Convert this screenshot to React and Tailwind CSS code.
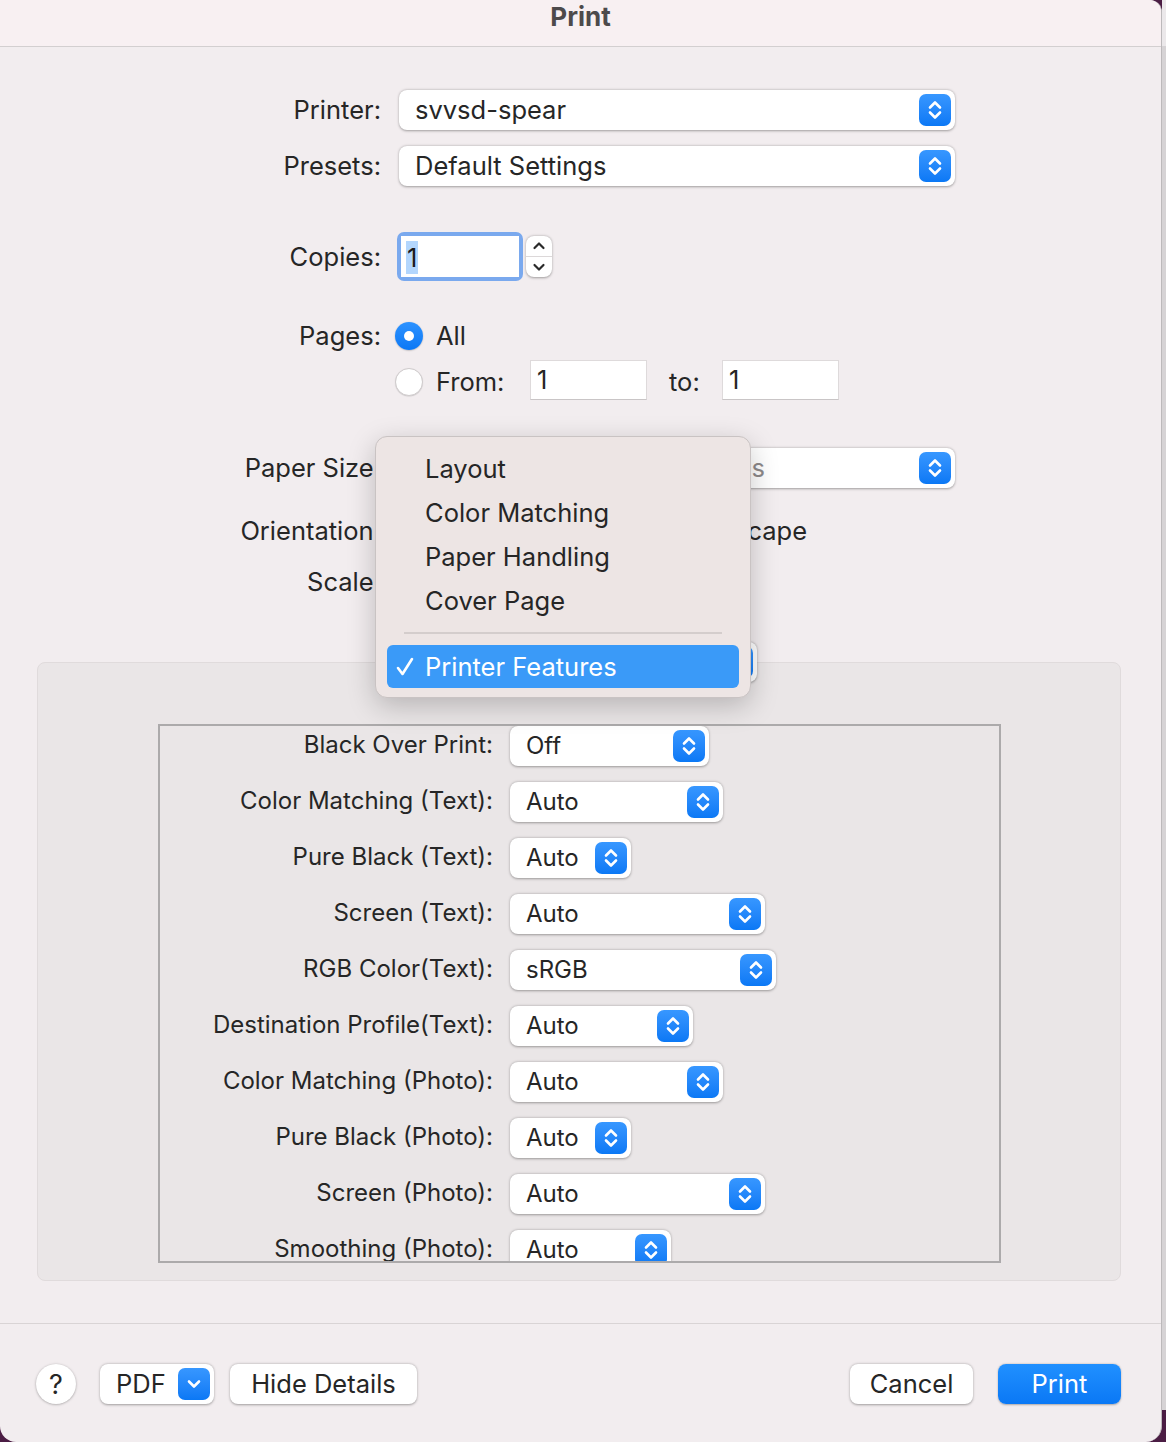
import React from 'react';

const font = "font-['Inter','Liberation_Sans',sans-serif]";

function Stepper() {
    return (
        <div className="w-[32px] h-[32px] shrink-0 rounded-[7px] bg-gradient-to-b from-[#3797ff] to-[#0a78f5] flex items-center justify-center">
            <svg width="32" height="32" viewBox="0 0 32 32" fill="none" stroke="white" strokeWidth="2.6" strokeLinecap="round" strokeLinejoin="round">
                <path d="M11 13.5 L16 8.5 L21 13.5" />
                <path d="M11 18.5 L16 23.5 L21 18.5" />
            </svg>
        </div>
    );
}

function Select({ value, className = '', size = 'text-[25.5px]' }) {
    return (
        <div className={`h-[40px] bg-white rounded-[8px] shadow-[0_0.5px_2.5px_rgba(0,0,0,0.35)] flex items-center justify-between pl-[16px] pr-[4px] ${className}`}>
            <span className={`${size} leading-[32px] whitespace-nowrap text-[#262626]`}>{value}</span>
            <Stepper />
        </div>
    );
}

function Row({ label, className = '', children }) {
    return (
        <div className={`flex items-center ${className}`}>
            <div className="w-[381px] shrink-0 text-right text-[25.5px] text-[#262626] leading-[32px] whitespace-nowrap">{label}</div>
            {children}
        </div>
    );
}

function Field({ value }) {
    return (
        <div className="w-[117px] h-[40px] bg-white border border-[#dedadb] border-b-[#c9c5c6] flex items-center pl-[6px] text-[25.5px] text-[#262626]">
            {value}
        </div>
    );
}

const features = [
    { label: 'Black Over Print:', value: 'Off', w: 'w-[199px]' },
    { label: 'Color Matching (Text):', value: 'Auto', w: 'w-[213px]' },
    { label: 'Pure Black (Text):', value: 'Auto', w: 'w-[121px]' },
    { label: 'Screen (Text):', value: 'Auto', w: 'w-[255px]' },
    { label: 'RGB Color(Text):', value: 'sRGB', w: 'w-[266px]' },
    { label: 'Destination Profile(Text):', value: 'Auto', w: 'w-[183px]' },
    { label: 'Color Matching (Photo):', value: 'Auto', w: 'w-[213px]' },
    { label: 'Pure Black (Photo):', value: 'Auto', w: 'w-[121px]' },
    { label: 'Screen (Photo):', value: 'Auto', w: 'w-[255px]' },
    { label: 'Smoothing (Photo):', value: 'Auto', w: 'w-[161px]' },
];

const menuItems = ['Layout', 'Color Matching', 'Paper Handling', 'Cover Page'];

const btn = 'h-[40px] bg-white rounded-[8px] shadow-[0_0.5px_2.5px_rgba(0,0,0,0.35)] flex items-center text-[25.5px] text-[#262626] leading-none';

export default function App() {
    return (
        <div className={`flex w-[1166px] h-[1442px] bg-[#4b1d44] ${font}`}>
            <div className="relative w-[1162px] h-[1442px] bg-[#f2edef] rounded-tr-[12px] rounded-b-[16px] border-r border-[#bcb9bb] flex flex-col">
                {/* title bar */}
                <div className="h-[47px] shrink-0 bg-[#f8f0f2] rounded-tr-[12px] border-b border-[#d3cfd0] flex justify-center">
                    <span className="text-[26px] leading-[34px] font-bold text-[#4d4a4b]">Print</span>
                </div>

                <Row label="Printer:" className="mt-[43px] h-[40px]">
                    <Select value="svvsd-spear" className="ml-[18px] w-[556px]" />
                </Row>
                <Row label="Presets:" className="mt-[16px] h-[40px]">
                    <Select value="Default Settings" className="ml-[18px] w-[556px]" />
                </Row>

                <Row label="Copies:" className="mt-[46px] h-[49px]">
                    <div className="ml-[16px] w-[126px] h-[49px] rounded-[7px] bg-[#7aa9ee] p-[4px]">
                        <div className="w-full h-full bg-white flex items-center pl-[5px] pt-[2px]">
                            <span className="bg-[#b3d6fd] text-[25.5px] leading-[33px] text-[#1a1a1a] px-[1px]">1</span>
                        </div>
                    </div>
                    <div className="ml-[3px] w-[26px] h-[41px] bg-white rounded-[8px] shadow-[0_0.5px_2.5px_rgba(0,0,0,0.35)] flex flex-col">
                        <div className="flex-1 flex items-center justify-center border-b border-[#dcd8d9]">
                            <svg width="14" height="10" viewBox="0 0 14 10" fill="none" stroke="#2a2a2a" strokeWidth="2.2" strokeLinecap="round" strokeLinejoin="round"><path d="M2.5 7 L7 2.5 L11.5 7" /></svg>
                        </div>
                        <div className="flex-1 flex items-center justify-center">
                            <svg width="14" height="10" viewBox="0 0 14 10" fill="none" stroke="#2a2a2a" strokeWidth="2.2" strokeLinecap="round" strokeLinejoin="round"><path d="M2.5 3 L7 7.5 L11.5 3" /></svg>
                        </div>
                    </div>
                </Row>

                <Row label="Pages:" className="mt-[40px] h-[30px]">
                    <div className="ml-[14px] w-[28px] h-[28px] rounded-full bg-gradient-to-b from-[#2c92ff] to-[#0a78f5] flex items-center justify-center shadow-[0_0.5px_1.5px_rgba(0,0,0,0.3)]">
                        <div className="w-[10px] h-[10px] rounded-full bg-white"></div>
                    </div>
                    <span className="ml-[13px] text-[25.5px] text-[#262626] leading-none">All</span>
                </Row>
                <div className="mt-[9px] h-[40px] flex items-center">
                    <div className="ml-[395px] w-[28px] h-[28px] mt-[4px] rounded-full bg-white border border-[#cfcbcc] shadow-[0_0.5px_1px_rgba(0,0,0,0.15)]"></div>
                    <span className="ml-[13px] w-[94px] pt-[4px] text-[25.5px] text-[#262626] leading-none">From:</span>
                    <Field value="1" />
                    <span className="ml-[22px] w-[53px] pt-[4px] text-[25.5px] text-[#262626] leading-none">to:</span>
                    <Field value="1" />
                </div>

                <Row label="Paper Size:" className="mt-[48px] h-[40px]">
                    <div className="ml-[18px] w-[556px] h-[40px] bg-white rounded-[8px] shadow-[0_0.5px_2.5px_rgba(0,0,0,0.35)] flex items-center justify-between pl-[16px] pr-[4px]">
                        <span className="w-[350px] text-right text-[25.5px] leading-[32px] whitespace-nowrap text-[#8d8a8b]">8.50 by 11.00 inches</span>
                        <Stepper />
                    </div>
                </Row>
                <Row label="Orientation:" className="mt-[22px] h-[42px]">
                    <div className="ml-[18px] w-[408px] text-right text-[25.5px] text-[#262626] leading-[32px]">Landscape</div>
                </Row>
                <Row label="Scale:" className="mt-[10px] h-[40px]">
                    <div className="ml-[18px] w-[80px] h-[40px] bg-white border border-[#dedadb] flex items-center pl-[6px] text-[25.5px] text-[#262626]">100</div>
                    <span className="ml-[8px] text-[25.5px] text-[#262626]">%</span>
                </Row>

                {/* panel selector, sitting on the panel border */}
                <div className="relative z-10 mt-[40px] h-[40px] flex">
                    <Select value="Printer Features" className="ml-[399px] w-[358px]" />
                </div>

                <div className="-mt-[20px] mx-[37px] w-[1084px] h-[619px] shrink-0 bg-[#eae6e7] border border-[#e0dbdc] rounded-[8px] pt-[61px] pl-[120px]">
                    <div className="w-[843px] h-[539px] border-2 border-[#acaaab] overflow-hidden">
                        <div className="flex flex-col gap-[16px]">
                            {features.map((f) => (
                                <div key={f.label} className="flex items-center h-[40px] shrink-0">
                                    <div className="w-[333px] shrink-0 text-right text-[24px] text-[#262626] leading-[30px] whitespace-nowrap -mt-[2px]">{f.label}</div>
                                    <Select value={f.value} size="text-[24px]" className={`ml-[17px] ${f.w}`} />
                                </div>
                            ))}
                        </div>
                    </div>
                </div>

                <div className="mt-[42px] h-px shrink-0 bg-[#d9d4d5]"></div>

                <div className="mt-[40px] flex items-center pl-[36px] pr-[40px]">
                    <div className={`${btn} w-[40px] rounded-full justify-center text-[27px]`}>?</div>
                    <div className={`${btn} ml-[24px] w-[114px] justify-between pl-[16px] pr-[4px]`}>
                        <span>PDF</span>
                        <div className="w-[32px] h-[32px] rounded-[7px] bg-gradient-to-b from-[#3797ff] to-[#0a78f5] flex items-center justify-center">
                            <svg width="16" height="12" viewBox="0 0 16 12" fill="none" stroke="white" strokeWidth="2.6" strokeLinecap="round" strokeLinejoin="round"><path d="M3 3.5 L8 8.5 L13 3.5" /></svg>
                        </div>
                    </div>
                    <div className={`${btn} ml-[16px] w-[187px] justify-center`}>Hide Details</div>
                    <div className="flex-1"></div>
                    <div className={`${btn} w-[123px] justify-center`}>Cancel</div>
                    <div className="ml-[25px] w-[123px] h-[40px] rounded-[8px] bg-gradient-to-b from-[#2090ff] to-[#0a78f5] shadow-[0_0.5px_2px_rgba(0,0,0,0.3)] flex items-center justify-center text-[25.5px] text-white leading-none">Print</div>
                </div>

                {/* open pop-up menu */}
                <div className="absolute z-20 left-[375px] top-[436px] w-[376px] h-[262px] bg-[#ede5e4] border border-[#c9c3c3] rounded-[12px] shadow-[0_8px_28px_rgba(0,0,0,0.22)] pt-[10px] px-[11px]">
                    {menuItems.map((m) => (
                        <div key={m} className="h-[44px] flex items-center pl-[38px] text-[25.5px] text-[#262626] leading-none">{m}</div>
                    ))}
                    <div className="mt-[9px] mx-[17px] h-[2px] bg-[#d4cdcc]"></div>
                    <div className="mt-[11px] h-[43px] rounded-[6px] bg-[#3a9af8] flex items-center pl-[8px] text-[25.5px] text-white leading-none">
                        <svg width="20" height="22" viewBox="0 0 20 22" fill="none" stroke="white" strokeWidth="2.6" strokeLinecap="round" strokeLinejoin="round" className="shrink-0"><path d="M3 12 L7.5 18 L17 3" /></svg>
                        <span className="ml-[10px]">Printer Features</span>
                    </div>
                </div>
            </div>
            <div className="w-[4px] h-[1442px] flex flex-col">
                <div className="h-[46px] bg-[#ebe8ea]"></div>
                <div className="h-[1364px] bg-[#d6d3d5]"></div>
            </div>
        </div>
    );
}
